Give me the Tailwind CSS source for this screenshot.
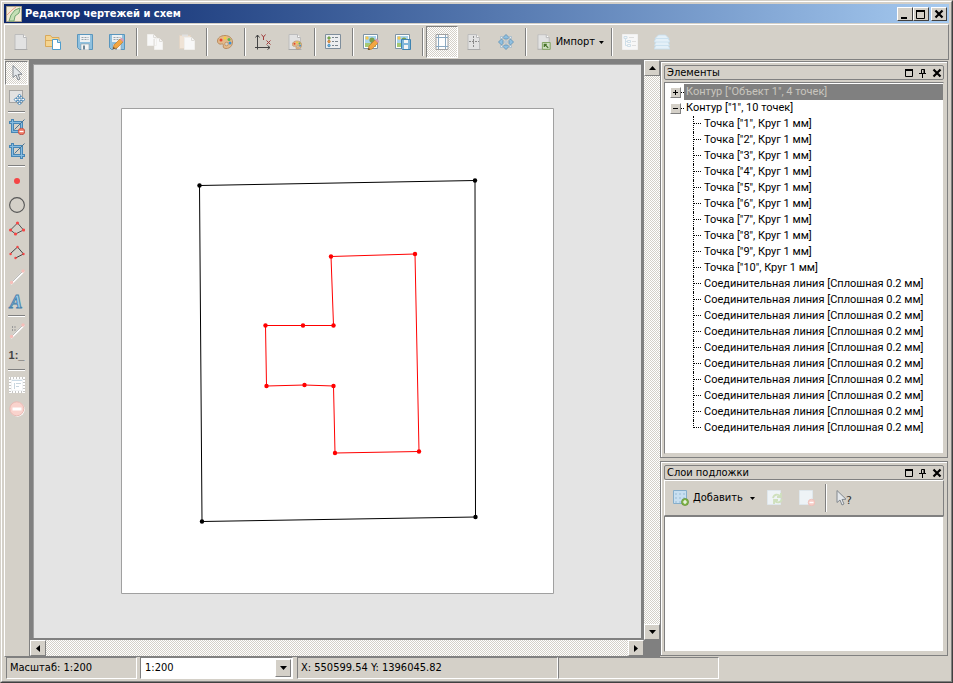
<!DOCTYPE html>
<html lang="ru">
  <head>
    <meta charset="UTF-8" />
    <meta name="viewport" content="width=device-width, initial-scale=1.0" />
    <title>Редактор чертежей и схем</title>
    <script src="https://cdn.jsdelivr.net/npm/@tailwindcss/browser@4"></script>
  </head>
  <body class="h-screen overflow-hidden bg-[#d4d0c8] font-['DejaVu_Sans_Condensed','DejaVu_Sans',sans-serif] text-[11px] leading-4 text-black">
    <!-- Shared icons -->
    <svg class="hidden">
      <symbol id="page" viewBox="0 0 16 16">
        <path d="M2 .5h8.500l3 3v12H2z" fill="#e2e2e2" stroke="#bdbdbd" />
        <path d="M10.500 .5v3h3" fill="#fff" stroke="#b8b8b8" />
        <path d="M1.500 15.500h13" stroke="#999" opacity=".5" />
      </symbol>
      <symbol id="floppy" viewBox="0 0 16 16">
        <path d="M.5 .5h15v15h-13l-2-2z" fill="#8fc0de" stroke="#5a96bd" />
        <path d="M3 1h10v7H3z" fill="#eef1f3" />
        <path d="M4.500 3.500h7M4.500 5.500h7" stroke="#9aa5ad" stroke-dasharray="2 1" />
        <path d="M4 10h8v6H4z" fill="#f4f4f4" stroke="#8a9aa5" stroke-width=".6" />
        <path d="M6 11.500h2v4H6z" fill="#6f8797" />
      </symbol>
      <symbol id="pencil" viewBox="0 0 16 16">
        <path d="M5 15l1-4 6-6 3 3-6 6z" fill="#f2a643" stroke="#c07c2c" stroke-width=".7" />
        <path d="M12 5l1.500-1.500 3 3L15 8z" fill="#d99bb4" />
        <path d="M5 15l.6-2.200 1.600 1.600z" fill="#5a4530" />
      </symbol>
      <symbol id="palette" viewBox="0 0 16 16">
        <path d="M8 1.500C3.500 1.500 .5 4 .5 7c0 2.600 2 3.500 4 3 1.600-.4 2.200.6 1.800 1.800C5.900 13.500 7 14.500 9 14.500c4 0 6.500-3 6.500-6.500 0-4-3.500-6.500-7.500-6.500z" fill="#e3b98a" stroke="#b98c60" />
        <circle cx="4" cy="6" r="1.500" fill="#e8432e" />
        <circle cx="8" cy="4" r="1.500" fill="#f3cf3a" />
        <circle cx="12" cy="5.500" r="1.500" fill="#57b84d" />
        <circle cx="13" cy="9" r="1.500" fill="#3b8fd6" />
        <circle cx="9.500" cy="10" r="1.800" fill="#d4d0c8" stroke="#b5804c" stroke-width=".6" />
      </symbol>
      <symbol id="picture" viewBox="0 0 16 16">
        <path d="M.5 .5h14v14H.5z" fill="#fff" stroke="#7d93a5" />
        <path d="M2 2h11v7H2z" fill="#a9d4ee" />
        <path d="M2 9h11v4H2z" fill="#a5c973" />
        <circle cx="4" cy="4" r="1.700" fill="#f6c851" />
        <circle cx="9" cy="6" r="2.600" fill="#7ba14c" />
        <path d="M9 8v4" stroke="#80603c" />
      </symbol>
      <symbol id="crop" viewBox="0 0 16 16">
        <path d="M3.500 0v12.500H16M0 3.500h12.500V16" fill="none" stroke="#4786b5" stroke-width="3" />
        <path d="M3.500 1v11.500H15M1 3.500h11.500V15" fill="none" stroke="#86bbe0" />
        <path d="M5.500 10.500L15.500 .5" stroke="#4b7391" />
      </symbol>
      <symbol id="arrow-cursor" viewBox="0 0 16 16">
        <path d="M4 .5v12l3-2.500 2 5 2-1-2-4.500 4-.3z" fill="#e4e7ea" stroke="#82888e" />
      </symbol>
      <symbol id="maximize" viewBox="0 0 10 10">
        <path d="M1.500 1.500h7v7h-7z" fill="none" stroke="#000" />
        <path d="M1 2h8" stroke="#000" stroke-width="2" />
      </symbol>
      <symbol id="pin" viewBox="0 0 10 10">
        <path d="M3.500 5V1.500h3V5M1 5.500h7M4.500 6v4" fill="none" stroke="#000" />
        <path d="M6 1v4" stroke="#000" />
      </symbol>
      <symbol id="close" viewBox="0 0 10 10">
        <path d="M1.500 1.500l7 7M8.500 1.500l-7 7" stroke="#000" stroke-width="2.200" />
      </symbol>
    </svg>

    <div class="flex h-full flex-col border border-[#d4d0c8] border-r-[#404040] border-b-[#404040]">
      <div class="flex min-h-0 flex-1 flex-col border border-t-white border-r-[#808080] border-b-[#808080] border-l-white p-0.5">
        <!-- Title bar -->
        <header class="flex h-[19px] shrink-0 items-center bg-linear-to-r from-[#0a246a] to-[#a6caf0] px-0.5">
          <svg class="size-4" viewBox="0 0 16 16">
            <path d="M.5 .5h15v15H.5z" fill="#f3ead6" stroke="#a8a088" />
            <path d="M3 15l2-6 4-5 5-2-1 5-4 3-1 5z" fill="#c4dfb4" stroke="#73a673" />
            <path d="M1 9l5-5 4-3" fill="none" stroke="#e6a08c" />
          </svg>
          <h1 class="ml-[3px] flex-1 font-bold text-white">Редактор чертежей и схем</h1>
          <button aria-label="Свернуть" class="flex h-3.5 w-4 items-center justify-center border border-t-white border-r-[#404040] border-b-[#404040] border-l-white bg-[#d4d0c8]">
            <svg class="size-2.5" viewBox="0 0 10 10"><path d="M1 8h6v2H1z" /></svg>
          </button>
          <button aria-label="Развернуть" class="flex h-3.5 w-4 items-center justify-center border border-t-white border-r-[#404040] border-b-[#404040] border-l-white bg-[#d4d0c8]">
            <svg class="size-2.5" viewBox="0 0 10 10"><path d="M.5 1.500h8v8h-8z" fill="none" stroke="#000" /><path d="M0 1h9v2H0z" /></svg>
          </button>
          <button aria-label="Закрыть" class="ml-0.5 flex h-3.5 w-4 items-center justify-center border border-t-white border-r-[#404040] border-b-[#404040] border-l-white bg-[#d4d0c8]">
            <svg class="size-2.5"><use href="#close" /></svg>
          </button>
        </header>

        <!-- Main toolbar -->
        <nav class="mt-px flex shrink-0 border border-t-white border-r-[#808080] border-b-[#808080] border-l-white py-px">
          <button aria-label="Создать" class="flex size-8 items-center justify-center"><svg class="size-4"><use href="#page" /></svg></button>
          <button aria-label="Открыть" class="flex size-8 items-center justify-center">
            <svg class="size-4" viewBox="0 0 16 16">
              <path d="M.5 12.500v-11h5l1.500 2h7v9z" fill="#f5d48f" stroke="#d9a95a" />
              <path d="M1 6.500h13" stroke="#d9a95a" />
              <path d="M7.500 5.500h5.500l2.500 2.500v7.500h-8z" fill="#fff" stroke="#4f9dcc" />
              <path d="M12.500 5.500v3h3" fill="#cfe6f4" stroke="#4f9dcc" />
            </svg>
          </button>
          <button aria-label="Сохранить" class="flex size-8 items-center justify-center"><svg class="size-4"><use href="#floppy" /></svg></button>
          <button aria-label="Сохранить как" class="flex size-8 items-center justify-center">
            <svg class="size-4" viewBox="0 0 16 16"><use href="#floppy" /><use href="#pencil" x="-1" /></svg>
          </button>
          <div class="my-0.5 mr-px ml-[3px] w-0.5 border-r border-l border-r-white border-l-[#808080]"></div>
          <button disabled aria-label="Копировать" class="flex size-8 items-center justify-center">
            <svg class="size-4" viewBox="0 0 16 16">
              <path d="M.5 .5h6l3 3v8h-9zM7.500 4.500h5l3 3v8h-8z" fill="#f8f8f8" stroke="#f0efec" />
              <path d="M6.500 .5v3h3M12.500 4.500v3h3M7 5v7" fill="none" stroke="#dedcd8" />
            </svg>
          </button>
          <button disabled aria-label="Вставить" class="flex size-8 items-center justify-center">
            <svg class="size-4" viewBox="0 0 16 16">
              <path d="M.5 1.500h11v13H.5z" fill="#efe3d6" stroke="#e2d5c6" />
              <path d="M3 .5h6v2H3z" fill="#e0e0e0" />
              <path d="M5.500 3.500h7l3 3v9h-10z" fill="#f8f8f8" stroke="#f0efec" />
              <path d="M12.500 3.500v3h3" fill="none" stroke="#dedcd8" />
            </svg>
          </button>
          <div class="my-0.5 mr-px ml-[3px] w-0.5 border-r border-l border-r-white border-l-[#808080]"></div>
          <button aria-label="Стили" class="flex size-8 items-center justify-center"><svg class="size-4"><use href="#palette" /></svg></button>
          <div class="my-0.5 mr-px ml-[3px] w-0.5 border-r border-l border-r-white border-l-[#808080]"></div>
          <button aria-label="Система координат" class="flex size-8 items-center justify-center">
            <svg class="size-4" viewBox="0 0 16 16">
              <path d="M2.500 1v14.500M0 13.500h15M.5 3.500l2-2.500 2 2.500M12.500 11.500l2.500 2-2.500 2" fill="none" stroke="#444" />
              <path d="M6.500 .5l2 2.500 2-2.500M8.500 3v3M11.500 6.500l4 4M15.500 6.500l-4 4" fill="none" stroke="#a03c3c" />
            </svg>
          </button>
          <button aria-label="Стиль документа" class="flex size-8 items-center justify-center">
            <svg class="size-4" viewBox="0 0 16 16"><use href="#page" /><use href="#palette" x="5" y="6" width="10" height="10" /></svg>
          </button>
          <div class="my-0.5 mr-px ml-[3px] w-0.5 border-r border-l border-r-white border-l-[#808080]"></div>
          <button aria-label="Свойства" class="flex size-8 items-center justify-center">
            <svg class="size-4" viewBox="0 0 16 16">
              <path d="M.5 .5h15v14H.5z" fill="#eceef0" stroke="#7f8e9c" />
              <circle cx="4" cy="4" r="1.300" fill="#8cc152" stroke="#55803a" stroke-width=".6" />
              <circle cx="4" cy="7.500" r="1.300" fill="#f09a3e" stroke="#a8672b" stroke-width=".6" />
              <circle cx="4" cy="11.500" r="1.300" fill="#63b1e5" stroke="#35749e" stroke-width=".6" />
              <path d="M7 3.500h6M7 7.500h6M7 11.500h6" stroke="#7a858e" stroke-dasharray="2 1 3" />
            </svg>
          </button>
          <div class="my-0.5 mr-px ml-[3px] w-0.5 border-r border-l border-r-white border-l-[#808080]"></div>
          <button aria-label="Изменить рисунок" class="flex size-8 items-center justify-center">
            <svg class="size-4" viewBox="0 0 16 16"><use href="#picture" /><use href="#pencil" y="1" /></svg>
          </button>
          <button aria-label="Сохранить рисунок" class="flex size-8 items-center justify-center">
            <svg class="size-4" viewBox="0 0 16 16">
              <use href="#picture" />
              <path d="M6.500 5.500h9v10h-8l-1-1z" fill="#7fb6da" stroke="#3f83b0" />
              <path d="M9 6h4v3H9zM9 11h4v4H9z" fill="#f4f4f4" />
            </svg>
          </button>
          <div class="my-0.5 mr-px ml-[3px] w-0.5 border-r border-l border-r-white border-l-[#808080]"></div>
          <button aria-label="Рамка листа" aria-pressed="true" class="ml-px flex size-8 items-center justify-center border border-t-[#808080] border-r-white border-b-white border-l-[#808080] bg-[conic-gradient(#fff_25%,#d4d0c8_0_50%,#fff_0_75%,#d4d0c8_0)] bg-[length:2px_2px]">
            <svg class="size-4" viewBox="0 0 16 16">
              <path d="M2 .5h12v15H2z" fill="#fdfdfd" stroke="#a0a0a0" />
              <path d="M4.500 1v14M11.500 1v14M2 3.500h12M2 12.500h12" stroke="#8aa8c0" />
            </svg>
          </button>
          <button aria-label="Центр листа" class="flex size-8 items-center justify-center">
            <svg class="size-4" viewBox="0 0 16 16"><use href="#page" /><path d="M7.500 2v12M3 7.500h10" stroke="#8a8a8a" stroke-dasharray="2 1" /></svg>
          </button>
          <button aria-label="Показать всё" class="flex size-8 items-center justify-center">
            <svg class="size-4" viewBox="0 0 16 16">
              <g fill="#8fbfe0" stroke="#5a8fb5" stroke-width=".8">
                <path id="fit" d="M8 .5l3 3L9.500 5h-3L5 3.500z" />
                <use href="#fit" transform="rotate(90 8 8)" />
                <use href="#fit" transform="rotate(180 8 8)" />
                <use href="#fit" transform="rotate(270 8 8)" />
              </g>
              <path d="M2.500 2.500h2v2h-2zM11.500 2.500h2v2h-2zM2.500 11.500h2v2h-2zM11.500 11.500h2v2h-2zM7 7h2v2H7z" fill="#e4edf4" stroke="#a3b8c8" stroke-width=".8" />
            </svg>
          </button>
          <div class="my-0.5 mr-px ml-[3px] w-0.5 border-r border-l border-r-white border-l-[#808080]"></div>
          <button class="flex h-8 w-20 items-center gap-1 pr-1 pl-2">
            <svg class="size-4" viewBox="0 0 16 16">
              <use href="#page" />
              <path d="M6.500 8.500h8v7h-8z" fill="#cfdfc0" stroke="#7fa35f" />
              <path d="M12.500 14L9 10.500M8.500 13v-2.500H11" fill="none" stroke="#47732a" stroke-width="1.300" />
            </svg>
            Импорт
            <svg class="ml-auto h-[3px] w-[5px]" viewBox="0 0 5 3"><path d="M0 0h5L2.500 3z" /></svg>
          </button>
          <div class="my-0.5 mr-px ml-[3px] w-0.5 border-r border-l border-r-white border-l-[#808080]"></div>
          <button disabled aria-label="Структура" class="flex size-8 items-center justify-center">
            <svg class="size-4" viewBox="0 0 16 16">
              <path d="M.5 .5h15v15H.5z" fill="#f7f7f7" stroke="#f0f0f0" />
              <path d="M2 2.500h3v2H2zM5.500 6.500h3v2h-3zM5.500 10.500h3v2h-3zM3.500 5v6.500h2M3.500 7.500h2" fill="none" stroke="#cfdfe9" />
              <path d="M7 3.500h5M10 7.500h4M10 11.500h4" stroke="#dedede" />
            </svg>
          </button>
          <button disabled aria-label="Слои" class="flex size-8 items-center justify-center">
            <svg class="size-4" viewBox="0 0 16 16">
              <g fill="#e4f0f8" stroke="#c6deed" stroke-width=".8">
                <path d="M2 11h12l2 4H0z" /><path d="M2 7.500h12l1.500 4H.5z" /><path d="M2 4h12l2 4H0z" /><path d="M4.500 1h7l3.500 3.500H1z" />
              </g>
            </svg>
          </button>
        </nav>

        <div class="flex min-h-0 flex-1">
          <!-- Drawing tools -->
          <aside class="flex w-[25px] shrink-0 flex-col border-b border-l border-b-[#808080] border-l-white pt-px">
            <button aria-label="Выбор" aria-pressed="true" class="flex h-6 w-[23px] items-center justify-center border border-t-[#808080] border-r-white border-b-white border-l-[#808080] bg-[conic-gradient(#fff_25%,#d4d0c8_0_50%,#fff_0_75%,#d4d0c8_0)] bg-[length:2px_2px]">
              <svg class="size-4"><use href="#arrow-cursor" /></svg>
            </button>
            <button aria-label="Переместить" class="flex h-6 w-[23px] items-center justify-center">
              <svg class="size-4" viewBox="0 0 16 16">
                <path d="M.5 1.500h13v12H.5z" fill="#e2e2e2" stroke="#6e6e6e" stroke-dasharray="1 1" />
                <path d="M10.500 5l2 2.500h-1.500v2.500h2.500V8.500l2.500 2-2.500 2V11.500H11v2.500h1.500l-2 2-2-2H10v-2.500H7.500v1.500L5 10.500l2.500-2v1.500H10V7.500H8.500z" fill="#fff" stroke="#4a86b4" stroke-width=".9" />
              </svg>
            </button>
            <div class="my-0.5 mr-1 ml-[3px] h-0.5 border-t border-b border-t-[#808080] border-b-white"></div>
            <button aria-label="Убрать обрезку" class="flex h-6 w-[23px] items-center justify-center">
              <svg class="size-4" viewBox="0 0 16 16">
                <use href="#crop" width="16" height="16" />
                <circle cx="12.500" cy="12.500" r="3.300" fill="#ee7a66" stroke="#c4493a" stroke-width=".7" />
                <path d="M10.500 12.500h4" stroke="#fff" stroke-width="1.300" />
              </svg>
            </button>
            <button aria-label="Обрезка" class="flex h-6 w-[23px] items-center justify-center"><svg class="size-4"><use href="#crop" /></svg></button>
            <div class="my-0.5 mr-1 ml-[3px] h-0.5 border-t border-b border-t-[#808080] border-b-white"></div>
            <button aria-label="Точка" class="flex h-6 w-[23px] items-center justify-center"><svg class="size-4" viewBox="0 0 16 16"><circle cx="8" cy="8" r="3" fill="#f54545" /></svg></button>
            <button aria-label="Окружность" class="flex h-6 w-[23px] items-center justify-center"><svg class="size-4" viewBox="0 0 16 16"><circle cx="8" cy="8" r="7.400" fill="none" stroke="#555" stroke-width="1.100" /></svg></button>
            <button aria-label="Контур" class="flex h-6 w-[23px] items-center justify-center">
              <svg class="size-4" viewBox="0 0 16 16">
                <path d="M8.500 2L14.500 9l-8 4-5-4z" fill="none" stroke="#555" />
                <g fill="#f54545"><circle cx="8.500" cy="2" r="1.600" /><circle cx="14.500" cy="9" r="1.600" /><circle cx="6.500" cy="13" r="1.600" /><circle cx="1.600" cy="9" r="1.600" /></g>
              </svg>
            </button>
            <button aria-label="Ломаная" class="flex h-6 w-[23px] items-center justify-center">
              <svg class="size-4" viewBox="0 0 16 16">
                <path d="M1.500 8.500l7-6.500 6 7-8 4" fill="none" stroke="#444" />
                <g fill="#f54545"><circle cx="8.500" cy="2" r="1.200" /><circle cx="14.500" cy="9" r="1.200" /><circle cx="6.500" cy="13" r="1.200" /><circle cx="1.600" cy="9" r="1.200" /></g>
              </svg>
            </button>
            <button disabled aria-label="Линия" class="flex h-6 w-[23px] items-center justify-center">
              <svg class="size-4" viewBox="0 0 16 16">
                <path d="M2 15L15 2" stroke="#fff" stroke-width="2" /><path d="M2 14L14 2" stroke="#bbb" />
                <circle cx="2.500" cy="13.500" r="1.700" fill="#f5bdb8" /><circle cx="14" cy="2" r="1.700" fill="#f5bdb8" />
              </svg>
            </button>
            <button aria-label="Текст" class="flex h-6 w-[23px] items-center justify-center">
              <svg class="h-5 w-[22px]" viewBox="0 0 22 20"><text x="10" y="17" text-anchor="middle" font-family="Liberation Serif, serif" font-size="19" font-weight="bold" font-style="italic" fill="#9dccea" stroke="#4781ab" stroke-width=".9">A</text></svg>
            </button>
            <div class="my-0.5 mr-1 ml-[3px] h-0.5 border-t border-b border-t-[#808080] border-b-white"></div>
            <button disabled aria-label="Размер" class="flex h-6 w-[23px] items-center justify-center">
              <svg class="size-4" viewBox="0 0 16 16">
                <path d="M2 15L15 2" stroke="#fff" stroke-width="2" /><path d="M2 14L14 2" stroke="#bbb" />
                <circle cx="2.500" cy="13.500" r="1.700" fill="#f5bdb8" /><circle cx="14" cy="2" r="1.700" fill="#f5bdb8" />
                <path d="M3.500 3v5M6 3v5" stroke="#999" stroke-dasharray="2 1" />
              </svg>
            </button>
            <button aria-label="Масштаб" class="flex h-6 w-[23px] items-center justify-center font-['Liberation_Sans',sans-serif] font-bold text-[#444]">1:_</button>
            <div class="my-0.5 mr-1 ml-[3px] h-0.5 border-t border-b border-t-[#808080] border-b-white"></div>
            <button disabled aria-label="Фрагмент" class="flex h-6 w-[23px] items-center justify-center">
              <svg class="size-4" viewBox="0 0 16 16">
                <path d="M1 1h14v14H1z" fill="#f2f4f5" stroke="#fff" stroke-width="2" /><path d="M1 1h14v14H1z" fill="none" stroke="#c6c6c6" stroke-dasharray="1 2" stroke-width="2" />
                <path d="M3 4h10v9H3z" fill="#fff" /><path d="M3 3.500h10" stroke="#cbdbe6" /><path d="M5.500 6v6M7 6.500h5M7 9.500h3" stroke="#c8d6df" />
              </svg>
            </button>
            <button disabled aria-label="Удалить" class="flex h-6 w-[23px] items-center justify-center">
              <svg class="size-4" viewBox="0 0 16 16"><circle cx="8.500" cy="8.500" r="7.200" fill="#fff" /><circle cx="7.800" cy="7.800" r="7" fill="#f9d3cd" stroke="#e8b9b3" /><path d="M3.500 6.500h9v3h-9z" fill="#fff" /></svg>
            </button>
          </aside>

          <!-- Sheet -->
          <main class="grid min-w-0 flex-1 grid-cols-[1fr_16px] grid-rows-[1fr_16px] bg-[#808080] pb-px">
            <div class="flex min-h-0 min-w-0 items-center justify-center overflow-hidden border-4 border-r-[3px] border-b-2 border-[#808080] bg-[#e4e4e4] shadow-[inset_1px_1px_#a0a0a0]">
              <svg class="h-[486px] w-[433px] shrink-0" viewBox="0 0 433 486">
                <path d="M.5 .5h432v485H.5z" fill="#fff" stroke="#a0a0a0" />
                <path d="M78.500 77.500L354 72.500L354.500 409L81 413.500z" fill="none" stroke="#000" />
                <g><circle cx="78.500" cy="77.500" r="2.200" /><circle cx="354" cy="72.500" r="2.200" /><circle cx="354.500" cy="409" r="2.200" /><circle cx="81" cy="413.500" r="2.200" /></g>
                <path d="M210 148.500L294 146L298 343.500L214 345L212.500 278L183.500 277L145.500 278L144.500 217.500H212.500z" fill="none" stroke="#f00" />
                <g fill="#f00">
                  <circle cx="210" cy="148.500" r="2.200" /><circle cx="294" cy="146" r="2.200" /><circle cx="298" cy="343.500" r="2.200" /><circle cx="214" cy="345" r="2.200" /><circle cx="212.500" cy="278" r="2.200" />
                  <circle cx="183.500" cy="277" r="2.200" /><circle cx="145.500" cy="278" r="2.200" /><circle cx="144.500" cy="217.500" r="2.200" /><circle cx="182" cy="217.500" r="2.200" /><circle cx="212.500" cy="217.500" r="2.200" />
                </g>
              </svg>
            </div>
            <div class="flex flex-col justify-between bg-[conic-gradient(#fff_25%,#d4d0c8_0_50%,#fff_0_75%,#d4d0c8_0)] bg-[length:2px_2px]">
              <button aria-label="Вверх" class="flex size-4 items-center justify-center border border-t-white border-r-[#808080] border-b-[#808080] border-l-white bg-[#d4d0c8]"><svg class="h-1 w-[7px]" viewBox="0 0 7 4"><path d="M0 4h7L3.500 0z" /></svg></button>
              <button aria-label="Вниз" class="flex size-4 items-center justify-center border border-t-white border-r-[#808080] border-b-[#808080] border-l-white bg-[#d4d0c8]"><svg class="h-1 w-[7px]" viewBox="0 0 7 4"><path d="M0 0h7L3.500 4z" /></svg></button>
            </div>
            <div class="ml-px flex justify-between bg-[conic-gradient(#fff_25%,#d4d0c8_0_50%,#fff_0_75%,#d4d0c8_0)] bg-[length:2px_2px]">
              <button aria-label="Влево" class="flex size-4 items-center justify-center border border-t-white border-r-[#808080] border-b-[#808080] border-l-white bg-[#d4d0c8]"><svg class="h-[7px] w-1" viewBox="0 0 4 7"><path d="M4 0v7L0 3.500z" /></svg></button>
              <button aria-label="Вправо" class="flex size-4 items-center justify-center border border-t-white border-r-[#808080] border-b-[#808080] border-l-white bg-[#d4d0c8]"><svg class="h-[7px] w-1" viewBox="0 0 4 7"><path d="M0 0v7l4-3.500z" /></svg></button>
            </div>
          </main>

          <!-- Docked panels -->
          <aside class="flex w-[289px] shrink-0 flex-col gap-[3px] pt-px pr-px pb-px">
            <section class="flex min-h-0 flex-1 flex-col border border-[#808080] p-[3px] shadow-[inset_1px_1px_#fff]">
              <header class="flex h-[15px] shrink-0 items-center gap-1 rounded-xs border border-[#808080] pr-px pl-0.5">
                <h2 class="flex-1">Элементы</h2>
                <button aria-label="Развернуть панель"><svg class="size-2.5"><use href="#maximize" /></svg></button>
                <button aria-label="Закрепить панель"><svg class="size-2.5"><use href="#pin" /></svg></button>
                <button aria-label="Закрыть панель"><svg class="size-2.5"><use href="#close" /></svg></button>
              </header>
              <div class="mt-0.5 flex-1 overflow-hidden border border-t-[#808080] border-r-[#d4d0c8] border-b-[#d4d0c8] border-l-[#808080] bg-white pt-px font-['Roboto',sans-serif]">
                <div class="flex items-center pl-[5px]">
                  <button aria-label="Раскрыть" class="flex size-[11px] items-center justify-center border border-t-white border-r-[#808080] border-b-[#808080] border-l-white bg-[#d4d0c8]"><svg class="size-[7px]" viewBox="0 0 7 7"><path d="M1 3.500h5M3.500 1v5" stroke="#000" /></svg></button>
                  <span class="w-[3px] border-b border-dotted border-black"></span>
                  <span class="flex-1 bg-[#808080] pl-0.5 text-[#c8c5be]">Контур ["Объект 1", 4 точек]</span>
                </div>
                <div class="flex items-center pl-[5px]">
                  <button aria-label="Свернуть" class="flex size-[11px] items-center justify-center border border-t-white border-r-[#808080] border-b-[#808080] border-l-white bg-[#d4d0c8]"><svg class="size-[7px]" viewBox="0 0 7 7"><path d="M1 3.500h5" stroke="#000" /></svg></button>
                  <span class="w-[3px] border-b border-dotted border-black"></span>
                  <span class="flex-1 pl-0.5">Контур ["1", 10 точек]</span>
                </div>
                <ul id="tree" class="ml-7"></ul>
              </div>
            </section>

            <section class="flex h-[195px] shrink-0 flex-col border border-[#808080] p-[3px] shadow-[inset_1px_1px_#fff]">
              <header class="flex h-[15px] shrink-0 items-center gap-1 rounded-xs border border-[#808080] pr-px pl-0.5">
                <h2 class="flex-1">Слои подложки</h2>
                <button aria-label="Развернуть панель"><svg class="size-2.5"><use href="#maximize" /></svg></button>
                <button aria-label="Закрепить панель"><svg class="size-2.5"><use href="#pin" /></svg></button>
                <button aria-label="Закрыть панель"><svg class="size-2.5"><use href="#close" /></svg></button>
              </header>
              <nav class="flex h-9 shrink-0 items-center border border-t-white border-r-[#808080] border-b-[#808080] border-l-white">
                <button class="flex h-8 w-[94px] items-center gap-1 pr-1 pl-2">
                  <svg class="size-4" viewBox="0 0 16 16">
                    <path d="M.5 .5h13v13H.5z" fill="#c8dff0" stroke="#86aecb" />
                    <path d="M2 4h11M2 8h11M2 12h11" stroke="#b0cde2" stroke-width="2" stroke-dasharray="2 2" />
                    <circle cx="12" cy="12" r="3.500" fill="#85b84c" stroke="#5b8a2e" stroke-width=".7" /><path d="M10 12h4M12 10v4" stroke="#fff" stroke-width="1.200" />
                  </svg>
                  Добавить
                  <svg class="ml-auto h-[3px] w-[5px]" viewBox="0 0 5 3"><path d="M0 0h5L2.500 3z" /></svg>
                </button>
                <button disabled aria-label="Обновить" class="flex size-8 items-center justify-center">
                  <svg class="size-4" viewBox="0 0 16 16"><path d="M.5 .5h13v14H.5z" fill="#eef3f6" stroke="#dfe7ec" /><path d="M6 8c1-4 5-4 7-2M14 3v4h-4M15 9c-1 4-5 4-7 2M7 14v-4h4" fill="none" stroke="#cfe0bd" stroke-width="1.800" /></svg>
                </button>
                <button disabled aria-label="Удалить слой" class="flex size-8 items-center justify-center">
                  <svg class="size-4" viewBox="0 0 16 16"><path d="M.5 .5h13v14H.5z" fill="#eef3f6" stroke="#dfe7ec" /><circle cx="12.500" cy="12.500" r="3.300" fill="#f7cdc7" stroke="#edbbb4" stroke-width=".7" /><path d="M10.500 12.500h4" stroke="#fff" stroke-width="1.400" /></svg>
                </button>
                <div class="mx-0.5 h-7 w-0.5 border-r border-l border-r-white border-l-[#808080]"></div>
                <button aria-label="Сведения о слое" class="flex size-8 items-center justify-center">
                  <svg class="h-5 w-6" viewBox="0 0 24 20"><use href="#arrow-cursor" y="2" width="16" height="16" /><text x="13" y="16" font-family="DejaVu Sans" font-size="11" fill="#333">?</text></svg>
                </button>
              </nav>
              <div class="flex-1 border border-t-[#808080] border-r-[#d4d0c8] border-b-[#d4d0c8] border-l-[#808080] bg-white"></div>
            </section>
          </aside>
        </div>

        <!-- Status bar -->
        <footer class="flex h-[22px] shrink-0 pl-0.5">
          <label for="scale" class="w-[131px] border border-t-[#808080] border-r-white border-b-white border-l-[#808080] pt-0.5 pl-[3px]">Масштаб: 1:200</label>
          <div class="ml-[3px] flex w-[153px] border border-t-[#808080] border-r-white border-b-white border-l-[#808080] bg-white p-px">
            <select id="scale" class="flex-1 appearance-none bg-white pl-[3px] outline-none">
              <option>1:200</option>
            </select>
            <span class="flex w-4 items-center justify-center border border-t-white border-r-[#808080] border-b-[#808080] border-l-white bg-[#d4d0c8]"><svg class="h-1 w-[7px]" viewBox="0 0 7 4"><path d="M0 0h7L3.500 4z" /></svg></span>
          </div>
          <p class="ml-1 w-[261px] border border-t-[#808080] border-r-white border-b-white border-l-[#808080] pt-0.5 pl-[3px]">X: 550599.54 Y: 1396045.82</p>
          <p class="w-[161px] border border-t-[#808080] border-r-white border-b-white border-l-[#808080]"></p>
        </footer>
      </div>
    </div>

    <script>
      const tree = document.getElementById("tree");
      const items = [];

      for (let i = 1; i <= 10; i++) {
        items.push(`Точка ["${i}", Круг 1 мм]`);
      }
      for (let i = 1; i <= 10; i++) {
        items.push("Соединительная линия [Сплошная 0.2 мм]");
      }

      items.forEach((text) => {
        const li = document.createElement("li");
        li.className =
          "flex h-4 gap-[3px] border-l border-dotted border-black whitespace-nowrap before:h-2 before:w-[7px] before:border-b before:border-dotted before:border-black last:border-l-0 last:before:w-2 last:before:border-l";
        li.textContent = text;
        tree.appendChild(li);
      });
    </script>
  </body>
</html>
